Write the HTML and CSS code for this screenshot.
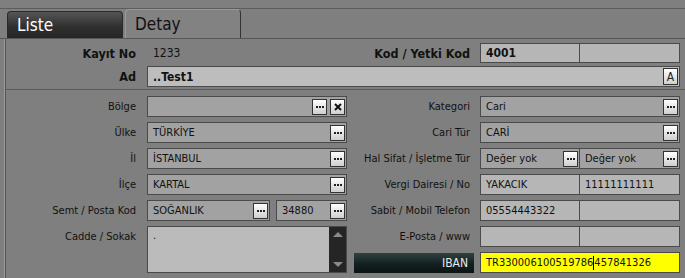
FILE: index.html
```html
<!DOCTYPE html>
<html lang="tr">
<head>
  <meta charset="UTF-8" />
  <title>Cari Detay</title>
  <link rel="stylesheet" href="styles.css">
</head>
<body>
  <div class="tabbar">
    <div class="tab tab-off">Liste</div>
    <div class="tab tab-on">Detay</div>
  </div>

  <div class="panel">
    <div class="head grid">
      <div class="label bold">Kayıt No</div>
      <div class="plain">1233</div>
      <div class="label bold">Kod / Yetki Kod</div>
      <div class="pair">
        <div class="fld bold">4001</div>
        <div class="fld"></div>
      </div>

      <div class="label bold">Ad</div>
      <div class="fld bold wide">..Test1<span class="abtn">A</span></div>
    </div>

    <div class="body grid">
      <div class="label">Bölge</div>
      <div class="fld lookup"><span class="dots"></span><span class="xbtn"><svg width="8" height="8" viewBox="0 0 8 8"><path d="M1 1L7 7M7 1L1 7" stroke="#111" stroke-width="2"/></svg></span></div>
      <div class="label">Kategori</div>
      <div class="fld lookup">Cari<span class="dots"></span></div>

      <div class="label">Ülke</div>
      <div class="fld lookup">TÜRKİYE<span class="dots"></span></div>
      <div class="label">Cari Tür</div>
      <div class="fld lookup">CARİ<span class="dots"></span></div>

      <div class="label">İl</div>
      <div class="fld lookup">İSTANBUL<span class="dots"></span></div>
      <div class="label">Hal Sifat / İşletme Tür</div>
      <div class="pair">
        <div class="fld lookup">Değer yok<span class="dots"></span></div>
        <div class="fld lookup">Değer yok<span class="dots"></span></div>
      </div>

      <div class="label">İlçe</div>
      <div class="fld lookup">KARTAL<span class="dots"></span></div>
      <div class="label">Vergi Dairesi / No</div>
      <div class="pair">
        <div class="fld">YAKACIK</div>
        <div class="fld">11111111111</div>
      </div>

      <div class="label">Semt / Posta Kod</div>
      <div class="semt">
        <div class="fld lookup">SOĞANLIK<span class="dots"></span></div>
        <div class="fld lookup">34880<span class="dots"></span></div>
      </div>
      <div class="label">Sabit / Mobil Telefon</div>
      <div class="pair">
        <div class="fld">05554443322</div>
        <div class="fld"></div>
      </div>

      <div class="label top">Cadde / Sokak</div>
      <div class="memo">
        <div class="memo-text">.</div>
        <div class="scroll"><span class="up"></span><span class="down"></span></div>
      </div>
      <div class="label">E-Posta / www</div>
      <div class="pair">
        <div class="fld"></div>
        <div class="fld"></div>
      </div>

      <div class="iban-cell"><div class="iban">IBAN</div></div>
      <div class="fld yellow">TR330006100519786<span class="caret"></span>457841326</div>
    </div>
  </div>
</body>
</html>
```

FILE: styles.css
```css
body {
  margin: 0;
  width: 685px;
  height: 278px;
  overflow: hidden;
  background: #7f7f7f;
  color: #111;
  font-family: "DejaVu Sans Condensed", "Liberation Sans", sans-serif;
  font-size: 11px;
}

.tabbar {
  margin-top: 8px;
  border-top: 1px solid #5c5c5c;
  border-bottom: 1px solid #565656;
  height: 29px;
  padding-left: 7px;
  display: flex;
  align-items: flex-end;
}

.tab {
  box-sizing: border-box;
  width: 116px;
  padding-left: 9px;
  font-size: 17px;
  display: flex;
  align-items: center;
}

.tab-off {
  height: 27px;
  color: #fff;
  background: linear-gradient(#555, #2e2e2e 60%, #262626);
  border: 1px solid #2a2a2a;
  border-bottom: none;
  border-radius: 4px 4px 0 0;
}

.tab-on {
  height: 29px;
  margin-left: 2px;
  color: #111;
  background: #828282;
  border-top: 1px solid #9a9a9a;
  border-left: 1px solid #9a9a9a;
  border-right: 1px solid #333;
  border-radius: 4px 4px 0 0;
}

.panel {
  margin-left: 4px;
  border-left: 1px solid #9a9a9a;
  box-shadow: inset 1px 0 #555;
  padding-left: 1px;
  height: 240px;
}

.grid {
  display: grid;
  grid-template-columns: 141px 200px 133px 200px;
  align-items: center;
}

.head {
  padding: 4px 0 2px;
  row-gap: 3px;
  grid-template-rows: 20px 21px;
  border-bottom: 1px solid #5a5a5a;
}

.body {
  padding-top: 6px;
  row-gap: 5px;
  grid-template-rows: repeat(7, 21px);
}

.label {
  text-align: right;
  padding-right: 11px;
  white-space: nowrap;
}

.grid > .label:nth-child(4n+3) {
  padding-right: 10px;
}

.label.top {
  align-self: start;
  padding-top: 4px;
}

.bold {
  font-weight: bold;
  font-size: 12px;
}

.label.bold {
  font-size: 12.5px;
}

.plain {
  padding-left: 6px;
  font-size: 12px;
}

.fld {
  box-sizing: border-box;
  height: 21px;
  display: flex;
  align-items: center;
  padding-left: 5px;
  border: 1px solid #4a4a4a;
  background: #b6b6b6;
  white-space: nowrap;
  min-width: 0;
}

.head .fld {
  height: 20px;
}

.head .wide {
  height: 21px;
}

.lookup {
  background: #a2a2a2;
}

.wide {
  grid-column: 2 / 5;
  background: #bdbdbd;
}

.pair {
  display: grid;
  grid-template-columns: 100px 100px;
}

.pair .fld + .fld {
  border-left: none;
}

.semt {
  display: grid;
  grid-template-columns: 123px 71px;
  column-gap: 6px;
}

.dots,
.xbtn,
.abtn {
  box-sizing: border-box;
  flex: none;
  width: 15px;
  height: 16px;
  margin-left: auto;
  margin-right: 1px;
  border: 1px solid #333;
  background: linear-gradient(#fff, #e2e2e2 60%, #cfcfcf);
  display: flex;
  align-items: center;
  justify-content: center;
}

.dots::before {
  content: "";
  width: 2px;
  height: 2px;
  margin-right: 6px;
  background: #222;
  box-shadow: 3px 0 #222, 6px 0 #222;
}

.dots + .xbtn {
  margin-left: 2px;
}

.abtn {
  height: 17px;
  font-weight: normal;
  font-size: 12px;
  color: #222;
}

.memo {
  grid-row: span 2;
  align-self: stretch;
  box-sizing: border-box;
  border: 1px solid #4a4a4a;
  background: #bbb;
  display: flex;
}

.memo-text {
  flex: 1;
  padding: 2px 5px;
}

.scroll {
  width: 17px;
  background: #252525;
  display: flex;
  flex-direction: column;
  justify-content: space-between;
  align-items: center;
  padding: 5px 0;
}

.up,
.down {
  width: 0;
  height: 0;
  border-left: 5px solid transparent;
  border-right: 5px solid transparent;
}

.up {
  border-bottom: 5px solid #8a8a8a;
}

.down {
  border-top: 5px solid #8a8a8a;
}

.iban-cell {
  grid-column: 3;
  padding: 0 6px 0 7px;
}

.iban {
  height: 20px;
  box-sizing: border-box;
  background: linear-gradient(#2f4242, #132020 55%, #0c1414);
  color: #e8e8e8;
  font-size: 12px;
  text-align: right;
  padding-right: 6px;
  line-height: 21px;
}

.yellow {
  grid-column: 4;
  background: #ffff00;
  color: #111;
}

.caret {
  display: inline-block;
  width: 1px;
  height: 14px;
  background: #000;
}
```
